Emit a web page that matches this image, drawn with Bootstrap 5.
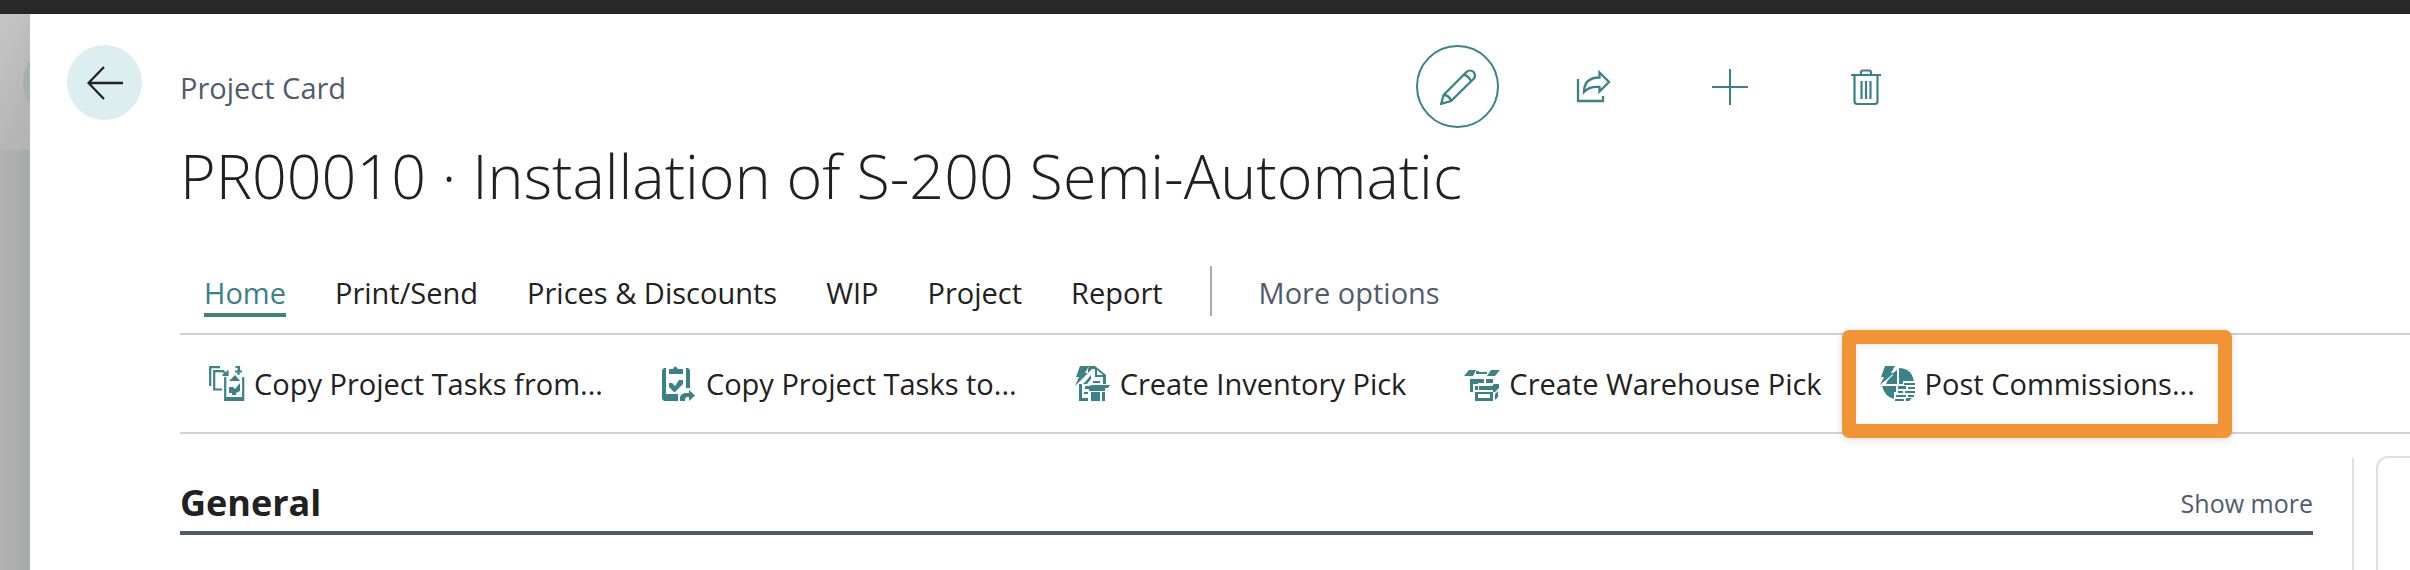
<!DOCTYPE html>
<html lang="en">
<head>
<meta charset="utf-8">
<meta name="viewport" content="width=device-width, initial-scale=1">
<title>Project Card</title>
<link href="https://cdn.jsdelivr.net/npm/bootstrap@5.3.0/dist/css/bootstrap.min.css" rel="stylesheet">
<style>
  :root { --teal: #3a8288; --ink: #212121; --slate: #505c6d; --rule: #d0d0d7; }
  body { font-family: "Open Sans", "Noto Sans", sans-serif; font-size: 29px; line-height: 40px; color: var(--ink); background: #fff; overflow: hidden; }
  a { text-decoration: none; color: inherit; }
  button { color: inherit; }
  .topbar { height: 14px; background: #282828; }
  .backdrop { width: 30px; background: linear-gradient(115deg, #c6c6c6, #b6b6b6 60px, #b0b0b0 120px, #a8aaa9); overflow: hidden; }
  .backdrop-lower { top: 136px; background: linear-gradient(90deg, #b2b2b2, #a6a8a7); }
  .backdrop-dot { width: 75px; height: 75px; left: 23px; top: 31px; background: #a3b1b2; }
  .back-btn { width: 75px; height: 75px; background: #dceef0; margin: 31px 38px 0 37px; }
  .caption-row { height: 83px; margin-top: 31px; color: var(--slate); }
  .caption { padding-top: 2px; }
  .tools { left: 1236px; gap: 53px; color: var(--teal); }
  .tool-btn { width: 83px; height: 83px; border: 2px solid transparent; }
  .tool-btn.current { border-color: var(--teal); }
  .record-title { font-size: 61px; line-height: 88px; font-weight: 300; margin: 4px 0 0; }
  .tabs { height: 115px; padding: 46px 0 0 24px; gap: 47px; border-bottom: 2px solid var(--rule); }
  .tab-group { gap: 49px; padding-top: 7px; }
  .tab-link.active { color: var(--teal); border-bottom: 4px solid var(--teal); }
  .tab-more { color: var(--slate); padding-top: 7px; }
  .tab-split { width: 2px; height: 50px; background: #a6acb6; }
  .actions { height: 99px; padding-left: 29px; gap: 58px; border-bottom: 2px solid var(--rule); }
  .action-btn { gap: 9px; }
  .action-btn svg { color: var(--teal); width: 36px; height: 36px; }
  .callout-frame { inset: -34px -37px -34px -38px; border: 14px solid #f29335; border-radius: 7px; box-shadow: 0 2px 8px #0002, inset 0 2px 8px #0001; pointer-events: none; }
  .general-head { margin: 44px 0 0; padding-bottom: 3px; border-bottom: 4px solid var(--slate); }
  .general-head h2 { font-size: 36px; line-height: 50px; font-weight: 700; }
  .more-link { font-size: 25px; color: var(--slate); }
  .side-rule { width: 2px; margin: 24px 22px 0 39px; background: #dedee3; }
  .fact-pane { width: 34px; margin-top: 22px; border: solid #dedee3; border-width: 2px 0 0 2px; border-radius: 12px 0 0 0; }
</style>
</head>
<body class="d-flex flex-column vh-100">
<div class="topbar flex-shrink-0"></div>
<div class="d-flex flex-grow-1">
  <aside class="backdrop position-relative flex-shrink-0" aria-hidden="true">
    <div class="backdrop-lower position-absolute start-0 end-0 bottom-0"></div>
    <div class="backdrop-dot position-absolute rounded-circle"></div>
  </aside>
  <div class="flex-shrink-0">
    <button class="back-btn btn p-0 border-0 rounded-circle d-flex align-items-center justify-content-center" aria-label="Back">
      <svg width="36" height="34" viewBox="0 0 36 34" fill="none" stroke="#212121" stroke-width="2.3"><path d="M17 1 1.5 17 17 33M1.5 17H36"/></svg>
    </button>
  </div>
  <main class="flex-grow-1 d-flex flex-column">
    <div class="caption-row position-relative d-flex align-items-center">
      <span class="caption">Project Card</span>
      <div class="tools position-absolute d-flex">
        <button class="tool-btn current btn p-0 rounded-circle d-flex align-items-center justify-content-center" aria-label="Edit">
          <svg width="36" height="36" viewBox="0 0 36 36" fill="none" stroke="#3a8288" stroke-width="2.3"><path d="M1.2 34.8 3.5 26 26.5 3a4.8 4.8 0 0 1 7 7L11 32ZM23.5 5.5c3 .5 6.500 3.500 7.500 7M3.500 26c3.500 0 6.500 2.500 7.500 6"/></svg>
        </button>
        <button class="tool-btn btn p-0 d-flex align-items-center justify-content-center" aria-label="Share">
          <svg width="35" height="36" viewBox="0 0 35 36" fill="none" stroke="#3a8288" stroke-width="2.3"><path d="M2 10V32H27V27M8 23C8 14 13 8.500 23.500 8.500V3.500L33 13 23.500 22.500V18C17 17.500 12 18.500 8 23Z"/></svg>
        </button>
        <button class="tool-btn btn p-0 d-flex align-items-center justify-content-center" aria-label="New">
          <svg width="36" height="36" viewBox="0 0 36 36" fill="none" stroke="#3a8288" stroke-width="2"><path d="M18 0V36M0 18H36"/></svg>
        </button>
        <button class="tool-btn btn p-0 d-flex align-items-center justify-content-center" aria-label="Delete">
          <svg width="30" height="36" viewBox="0 0 30 36" fill="none" stroke="#3a8288" stroke-width="2.2"><path d="M0 6H30M10 6V3.500Q10 1.500 12 1.500H18Q20 1.500 20 3.500V6M3.500 6V32Q3.500 35 6.500 35H23.500Q26.500 35 26.500 32V6M10.500 12V30M15 12V30M19.500 12V30"/></svg>
        </button>
      </div>
    </div>
    <h1 class="record-title">PR00010 · Installation of S-200 Semi-Automatic</h1>
    <nav class="tabs d-flex align-items-start flex-shrink-0" aria-label="Actions">
      <div class="tab-group d-flex align-items-start">
        <a href="#" class="tab-link active">Home</a>
        <a href="#" class="tab-link">Print/Send</a>
        <a href="#" class="tab-link">Prices &amp; Discounts</a>
        <a href="#" class="tab-link">WIP</a>
        <a href="#" class="tab-link">Project</a>
        <a href="#" class="tab-link">Report</a>
      </div>
      <div class="tab-split"></div>
      <a href="#" class="tab-more">More options</a>
    </nav>
    <div class="actions d-flex align-items-center flex-shrink-0">
      <button class="action-btn bg-transparent border-0 p-0 d-flex align-items-center">
        <svg viewBox="0 0 36 36" fill="none" stroke="currentColor" stroke-width="2.200"><path d="M11 1.200H1.200V20M13 23.500H5.200V5.200H14L17.500 8.500M13.500 9H18.500V4.500"/><path d="M16.200 11V34H34.200V11M26.500 1H30V6M26 5.500H33M29.500 2.500V9"/><path fill="currentColor" stroke="none" d="M16 31H35V35H16ZM20 15 26 9 31 15ZM20 21H24L26 23 31 17V25L27 27V29H23V27H20Z"/></svg>
        <span>Copy Project Tasks from...</span>
      </button>
      <button class="action-btn bg-transparent border-0 p-0 d-flex align-items-center">
        <svg viewBox="0 0 36 36" fill="currentColor"><path d="M1 4 3 2H5V28H17V35H3L1 33ZM8 3H12Q14-2 17 3H22V8H8ZM25 2H27L29 4V22H25ZM8 17H11L14 20 18 14H22V18L14 26H13L8 21Z"/><path d="M19 35V31Q20 27 26 27H28V24L34 29.500 28 35V31H26Q24 31 24 35Z"/></svg>
        <span>Copy Project Tasks to...</span>
      </button>
      <button class="action-btn bg-transparent border-0 p-0 d-flex align-items-center">
        <svg viewBox="0 0 36 36" fill="currentColor"><path d="M5 0H14L10 7H13L0 20 4 11H1ZM14 0H20L31 9V18H28V11H20V3H17L13 7V3ZM22 4V9H28ZM11 15 16 9V13L12 18H8ZM18 15H25V17H18ZM14 20 17 19H35L33 22H30V25H14V23H10V20ZM4 18H7V32H13V35H4ZM9 26H13V28H9ZM16 26H25V35H16ZM27 26H30V35H27Z"/></svg>
        <span>Create Inventory Pick</span>
      </button>
      <button class="action-btn bg-transparent border-0 p-0 d-flex align-items-center">
        <svg viewBox="0 0 36 36" fill="currentColor"><path d="M5 4H12L9 10H0ZM27 4H36L31 10H23ZM12 5H15V6H23V8H12ZM6 13H20V17H14V18H9V26H6ZM22 13H29V17H22ZM11 20H14V24H11ZM15 20H28L30 18H35V22L31 26H29V24H15ZM34 25V31L31 34V28Z"/><path fill-rule="evenodd" d="M11 26H29V35H11ZM14 28V32H26V28Z"/></svg>
        <span>Create Warehouse Pick</span>
      </button>
      <button class="action-btn position-relative bg-transparent border-0 p-0 d-flex align-items-center">
        <svg viewBox="0 0 36 36" fill="currentColor"><path d="M5 0H15L11 7H14L0 19 4 11H1ZM19 2Q28 2 32 9L34 15H23V18H19ZM8 14 13 9V7L17 4V18H6ZM2 20H16V26H14V33Q5 31 2 20ZM24 17H35V19H24ZM18 20H26V23H18ZM28 21H35V23H28ZM18 25H23V27H18ZM25 25H35V27H25ZM16 29H26V31H16ZM28 29H34V31H28ZM15 33H24V35H15ZM26 32H32L29 35H26Z"/></svg>
        <span>Post Commissions...</span>
        <span class="callout-frame position-absolute"></span>
      </button>
    </div>
    <div class="d-flex flex-grow-1">
      <section class="flex-grow-1">
        <div class="general-head d-flex align-items-center justify-content-between">
          <h2 class="m-0">General</h2>
          <a href="#" class="more-link">Show more</a>
        </div>
      </section>
      <div class="side-rule"></div>
      <aside class="fact-pane"></aside>
    </div>
  </main>
</div>
<script src="https://cdn.jsdelivr.net/npm/bootstrap@5.3.0/dist/js/bootstrap.bundle.min.js"></script>
</body>
</html>
